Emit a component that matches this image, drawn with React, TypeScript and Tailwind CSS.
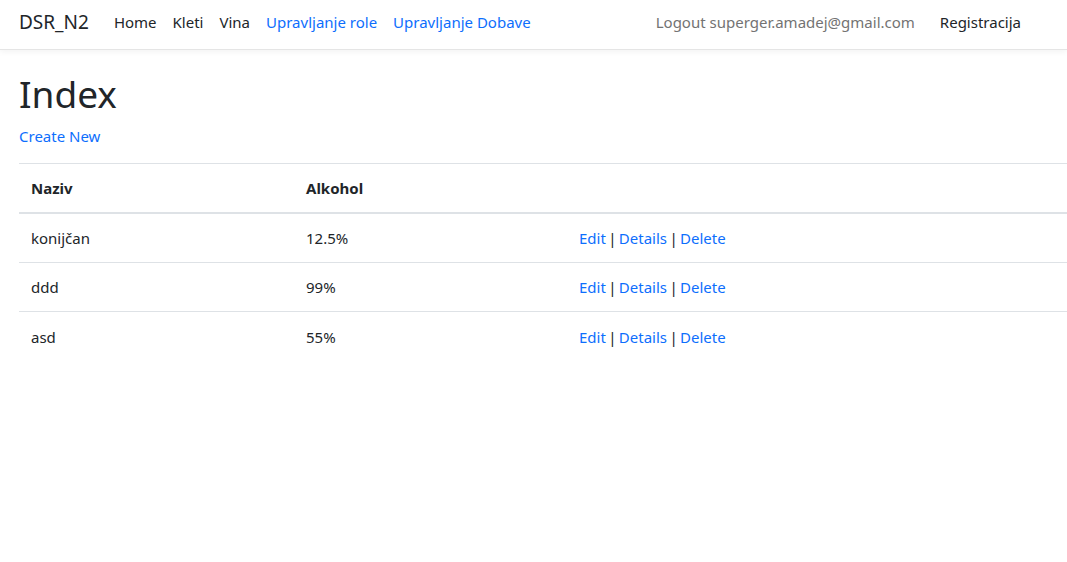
import React from "react";

const rows = [
  { naziv: "konijčan", alkohol: "12.5%" },
  { naziv: "ddd", alkohol: "99%" },
  { naziv: "asd", alkohol: "55%" },
];

function RowLinks() {
  return (
    <span className="flex items-center">
      <a href="#" className="text-[#0d6efd]">Edit</a>
      <span className="inline-block w-[13px] text-center">|</span>
      <a href="#" className="text-[#0d6efd]">Details</a>
      <span className="inline-block w-[13px] text-center">|</span>
      <a href="#" className="text-[#0d6efd]">Delete</a>
    </span>
  );
}

export default function App() {
  return (
    <div className="min-h-screen bg-white text-[15px] leading-6 text-[#212529] font-['Noto_Sans',sans-serif]">
      {/* Navbar */}
      <header className="h-[50px] border-b border-[#e5e5e5] shadow-[0_2px_6px_rgba(0,0,0,0.05)] flex items-center pb-[5px] pl-[19px] pr-[46px]">
        <a href="#" className="text-[19px] mr-[25px]">DSR_N2</a>
        <nav className="flex items-center gap-[16px]">
          <a href="#" className="text-[#212529]">Home</a>
          <a href="#" className="text-[#212529]">Kleti</a>
          <a href="#" className="text-[#212529]">Vina</a>
          <a href="#" className="text-[#0d6efd]">Upravljanje role</a>
          <a href="#" className="text-[#0d6efd]">Upravljanje Dobave</a>
        </nav>
        <div className="ml-auto flex items-center gap-[25px]">
          <a href="#" className="text-[#737373]">Logout superger.amadej@gmail.com</a>
          <a href="#" className="text-[#212529]">Registracija</a>
        </div>
      </header>

      {/* Content */}
      <main className="pl-[19px]">
        <h1 className="text-[37px] leading-[1.2] mt-[22px] mb-[8px]">Index</h1>
        <p className="mb-[15px]">
          <a href="#" className="text-[#0d6efd]">Create New</a>
        </p>
        <table className="w-full border-collapse text-left">
          <thead>
            <tr className="h-[49px] border-t border-[#dee2e6] border-b-2 border-b-[#dee2e6]">
              <th className="w-[275px] px-[12px] font-bold">Naziv</th>
              <th className="w-[273px] px-[12px] font-bold">Alkohol</th>
              <th className="px-[12px]"></th>
            </tr>
          </thead>
          <tbody>
            {rows.map((r, i) => (
              <tr
                key={i}
                className={`${i === 0 ? "h-[50px]" : "h-[49px]"} ${i < rows.length - 1 ? "border-b border-[#dee2e6]" : ""}`}
              >
                <td className="px-[12px]">{r.naziv}</td>
                <td className="px-[12px]">{r.alkohol}</td>
                <td className="px-[12px]"><RowLinks /></td>
              </tr>
            ))}
          </tbody>
        </table>
      </main>
    </div>
  );
}
